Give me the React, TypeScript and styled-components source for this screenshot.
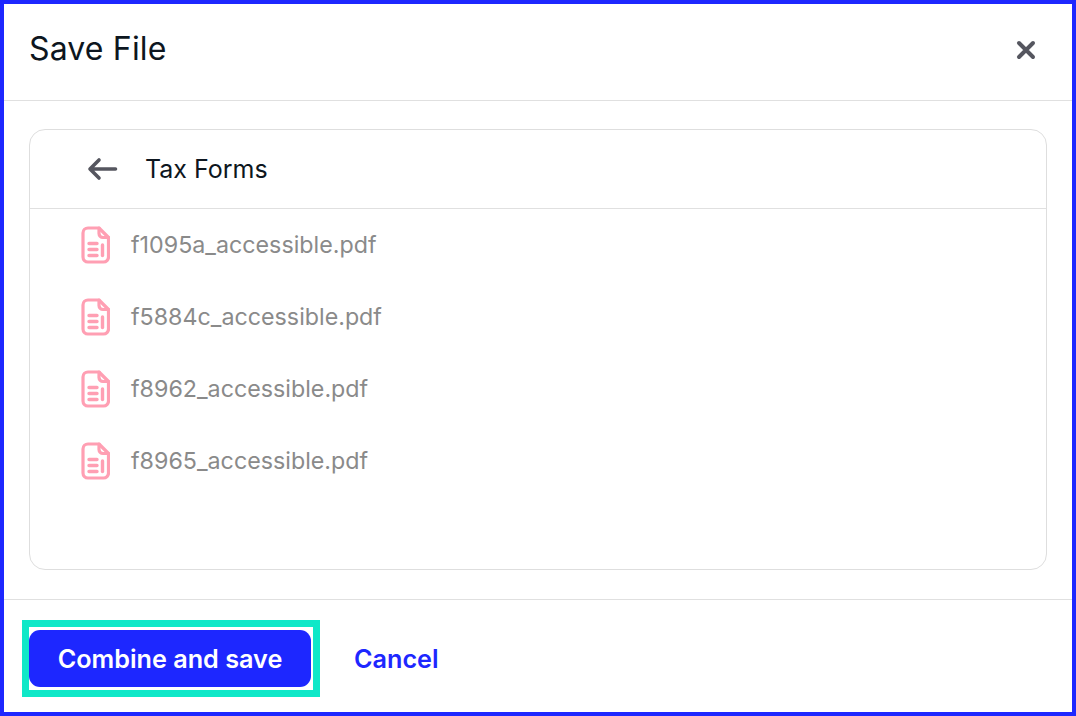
import React from "react";
import styled, { createGlobalStyle } from "styled-components";

const Global = createGlobalStyle`
  html, body { margin: 0; padding: 0; background: #fff; }
  *, *::before, *::after { box-sizing: border-box; }
  body { font-family: Inter, "Liberation Sans", sans-serif; }
`;

const Frame = styled.div`
  width: 1076px;
  height: 716px;
  border: 4px solid #1d27ff;
  background: #fff;
  display: flex;
  flex-direction: column;
`;

const Header = styled.header`
  height: 97px;
  flex: none;
  border-bottom: 1px solid #e0e0e0;
  display: flex;
  align-items: center;
  justify-content: space-between;
  padding: 0 36px 0 25px;
`;

const Title = styled.h1`
  margin: 0 0 6px;
  font-size: 32px;
  line-height: 36px;
  letter-spacing: 0.16px;
  font-weight: 400;
  color: #0d1620;
`;

const CloseButton = styled.button`
  border: 0;
  background: none;
  padding: 0;
  width: 20px;
  height: 20px;
  margin-bottom: 4px;
  display: flex;
  color: #55565f;
`;

const Body = styled.main`
  height: 498px;
  flex: none;
  padding: 28px 25px 29px;
  display: flex;
`;

const Panel = styled.section`
  flex: 1;
  border: 1px solid #dedede;
  border-radius: 16px;
  display: flex;
  flex-direction: column;
`;

const PanelHeader = styled.div`
  height: 79px;
  flex: none;
  border-bottom: 1px solid #e0e0e0;
  display: flex;
  align-items: center;
  padding-left: 56px;
  gap: 26px;
`;

const BackButton = styled.button`
  border: 0;
  background: none;
  padding: 0;
  width: 33px;
  height: 26px;
  display: flex;
  color: #55565f;
`;

const FolderName = styled.h2`
  margin: 0;
  font-size: 25px;
  line-height: 30px;
  font-weight: 400;
  color: #0d1620;
`;

const FileList = styled.ul`
  list-style: none;
  margin: 0;
  padding: 0;
`;

const FileRow = styled.li`
  height: 72px;
  display: flex;
  align-items: center;
  padding-left: 50px;
  gap: 21px;
`;

const FileName = styled.span`
  font-size: 23.25px;
  line-height: 28px;
  color: #8a8a8a;
`;

const Footer = styled.footer`
  flex: 1;
  border-top: 1px solid #e0e0e0;
  display: flex;
  align-items: flex-start;
  padding: 30px 25px 0;
  gap: 43px;
`;

const PrimaryWrap = styled.div`
  position: relative;
  &::after {
    content: "";
    position: absolute;
    left: -7.5px;
    top: -10.5px;
    width: 298.5px;
    height: 77px;
    border: 7px solid #0fe8c8;
    pointer-events: none;
  }
`;

const PrimaryButton = styled.button`
  display: block;
  width: 282px;
  height: 57px;
  border: 0;
  border-radius: 11px;
  background: #1d27ff;
  color: #fff;
  padding: 1px 0 0;
  font: 600 25.2px Inter, "Liberation Sans", sans-serif;
`;

const LinkButton = styled.button`
  border: 0;
  background: none;
  padding: 1px 0 0;
  height: 57px;
  color: #1d27ff;
  font: 600 25.2px Inter, "Liberation Sans", sans-serif;
`;

const FileIcon = () => (
  <svg width="30" height="38" viewBox="0 0 30 38" fill="none" stroke="#ff9fb3" strokeLinecap="round" strokeLinejoin="round" style={{ flex: "none" }}>
    <path d="M19 2H8a5 5 0 0 0-5 5v24a5 5 0 0 0 5 5h15.5a5 5 0 0 0 5-5V11.5z" strokeWidth="3.2" />
    <path d="M19 2v5.5a4 4 0 0 0 4 4h5.5" strokeWidth="3.2" />
    <path d="M9 17.5h8M9 23.5h8M9 29.5h8" strokeWidth="3.4" />
    <path d="M22.5 19v10.5" strokeWidth="3.4" />
  </svg>
);

const files = ["f1095a_accessible.pdf", "f5884c_accessible.pdf", "f8962_accessible.pdf", "f8965_accessible.pdf"];

export default function App() {
  return (
    <Frame>
      <Global />
      <Header>
        <Title>Save File</Title>
        <CloseButton aria-label="Close">
          <svg width="20" height="20" viewBox="0 0 20 20" fill="none" stroke="currentColor" strokeWidth="4" strokeLinecap="round">
            <path d="M3 3l14 14M17 3L3 17" />
          </svg>
        </CloseButton>
      </Header>
      <Body>
        <Panel>
          <PanelHeader>
            <BackButton aria-label="Back">
              <svg width="33" height="26" viewBox="0 0 33 26" fill="none" stroke="currentColor" strokeWidth="3.6" strokeLinecap="round" strokeLinejoin="round">
                <path d="M29.5 13H5M13 4l-9 9 9 9" />
              </svg>
            </BackButton>
            <FolderName>Tax Forms</FolderName>
          </PanelHeader>
          <FileList>
            {files.map((f) => (
              <FileRow key={f}>
                <FileIcon />
                <FileName>{f}</FileName>
              </FileRow>
            ))}
          </FileList>
        </Panel>
      </Body>
      <Footer>
        <PrimaryWrap>
          <PrimaryButton>Combine and save</PrimaryButton>
        </PrimaryWrap>
        <LinkButton>Cancel</LinkButton>
      </Footer>
    </Frame>
  );
}
